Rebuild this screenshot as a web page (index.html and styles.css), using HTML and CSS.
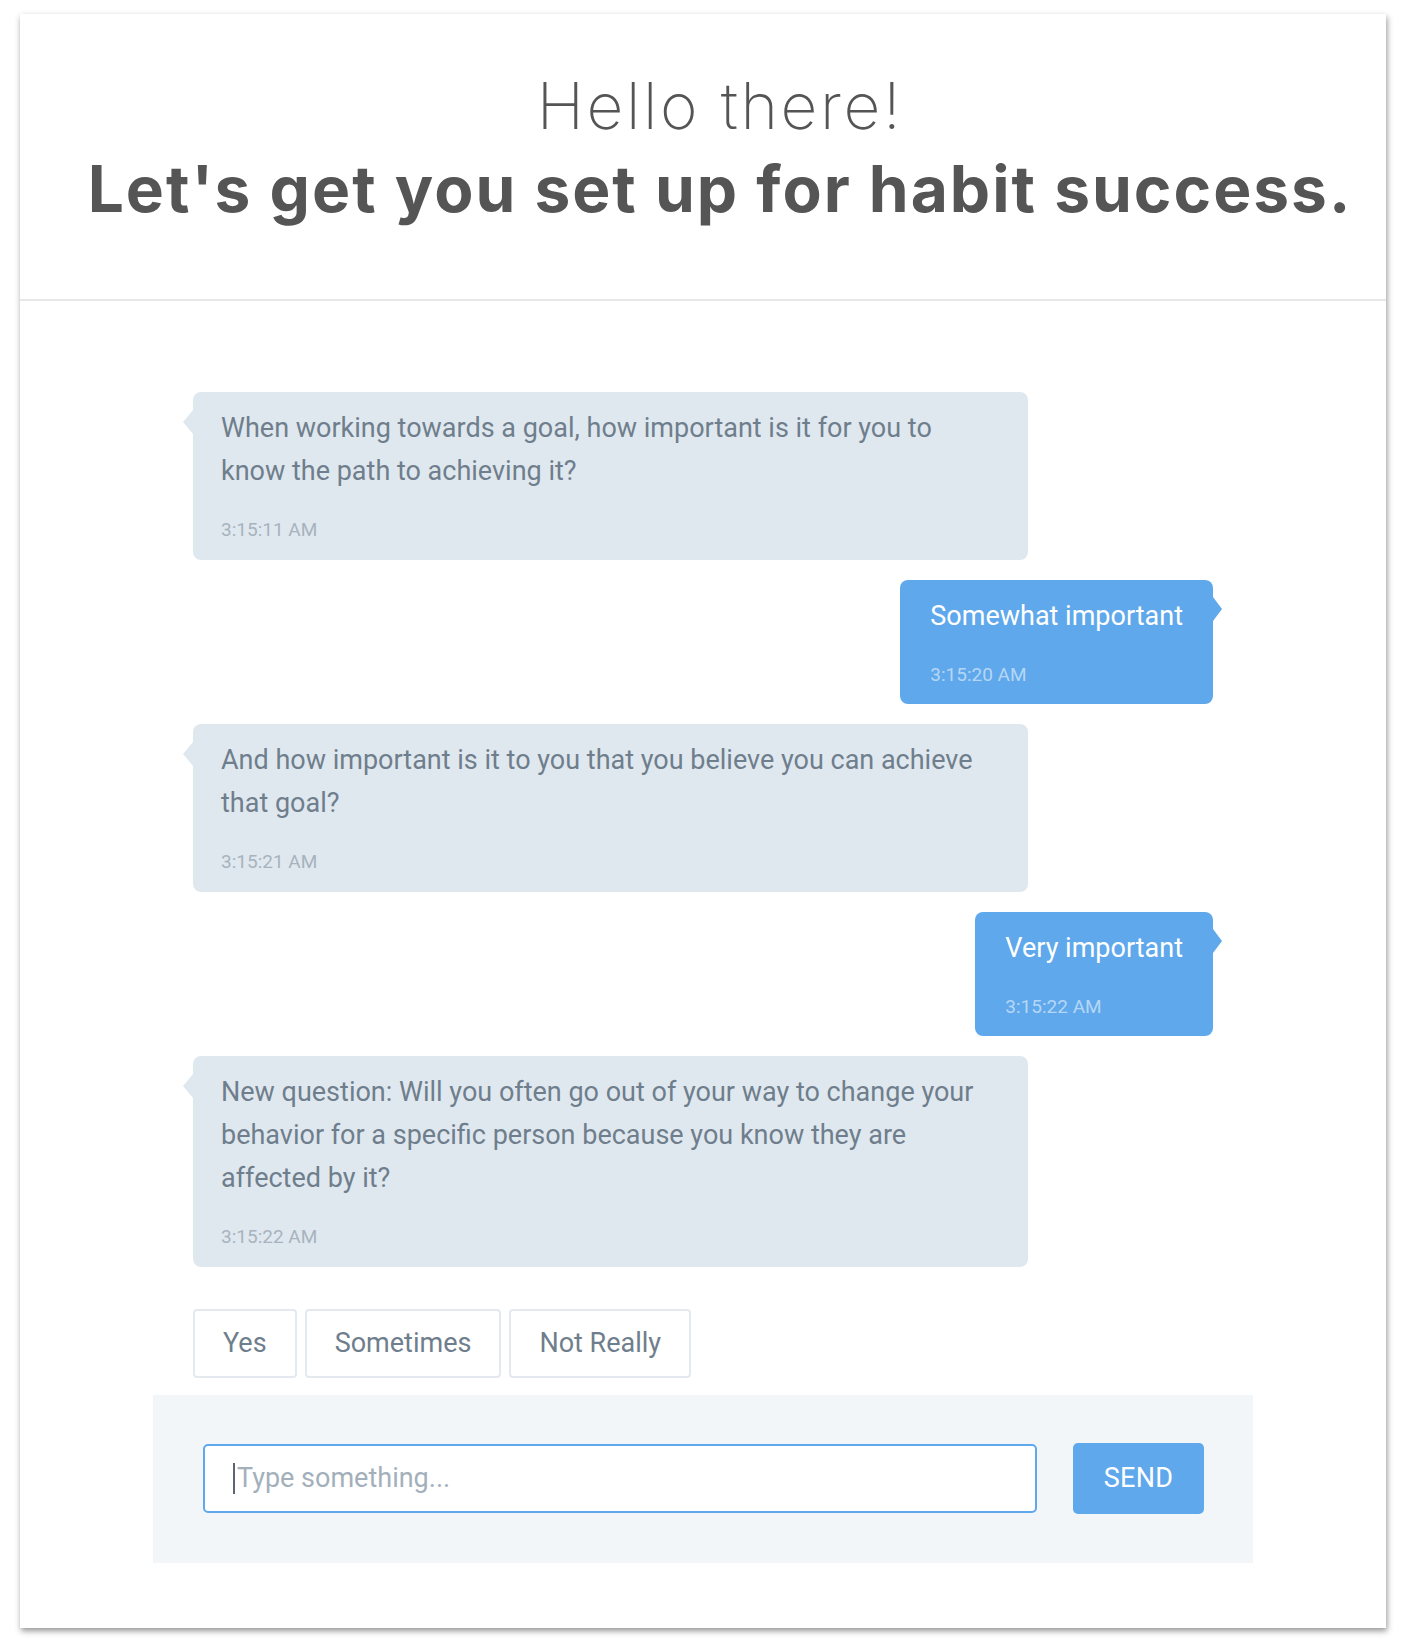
FILE: index.html
```html
<!DOCTYPE html>
<html lang="en">
<head>
<meta charset="utf-8">
<title>Habit setup</title>
<link rel="stylesheet" href="styles.css">
</head>
<body>
<div class="frame">
  <div class="card">
    <header class="intro">
      <h1 class="intro-title">
        <span class="hello">Hello there!</span>
        <span class="lead">Let's get you set up for habit success.</span>
      </h1>
    </header>
    <main class="chat">
      <div class="thread">
        <div class="msg bot">
          <p class="text">When working towards a goal, how important is it for you to know the path to achieving it?</p>
          <span class="time">3:15:11 AM</span>
        </div>
        <div class="msg user">
          <p class="text">Somewhat important</p>
          <span class="time">3:15:20 AM</span>
        </div>
        <div class="msg bot">
          <p class="text">And how important is it to you that you believe you can achieve that goal?</p>
          <span class="time">3:15:21 AM</span>
        </div>
        <div class="msg user">
          <p class="text">Very important</p>
          <span class="time">3:15:22 AM</span>
        </div>
        <div class="msg bot">
          <p class="text">New question: Will you often go out of your way to change your behavior for a specific person because you know they are affected by it?</p>
          <span class="time">3:15:22 AM</span>
        </div>
        <div class="choices">
          <button class="choice" type="button">Yes</button>
          <button class="choice" type="button">Sometimes</button>
          <button class="choice" type="button">Not Really</button>
        </div>
      </div>
      <form class="composer">
        <div class="field">
          <span class="caret"></span>
          <input class="input" type="text" placeholder="Type something...">
        </div>
        <button class="send" type="button">SEND</button>
      </form>
    </main>
  </div>
</div>
</body>
</html>
```
FILE: styles.css
```css
* {
  box-sizing: border-box;
}

html, body {
  margin: 0;
  padding: 0;
  background: #ffffff;
}

body {
  font-family: Roboto, "Liberation Sans", sans-serif;
}

.frame {
  padding: 14px 18px 14px 20px;
}

.card {
  width: 1366px;
  height: 1614px;
  background: #ffffff;
  box-shadow: 1px 3px 6px rgba(0, 0, 0, 0.42);
  display: flex;
  flex-direction: column;
}

/* Header */
.intro {
  padding: 50px 0 68px 34px;
  border-bottom: 2px solid #e6e8ea;
  text-align: center;
  color: #555555;
}

.intro-title {
  margin: 0;
  font-family: Inter, Lato, "Open Sans", sans-serif;
  font-weight: normal;
}

.hello {
  display: block;
  font-size: 64px;
  line-height: 83px;
  font-weight: 200;
  letter-spacing: 2.6px;
}

.lead {
  display: block;
  font-size: 64px;
  line-height: 84px;
  font-weight: 700;
  letter-spacing: 2px;
}

/* Chat */
.chat {
  padding-top: 91px;
  display: flex;
  flex-direction: column;
  align-items: center;
}

.thread {
  width: 1020px;
  display: flex;
  flex-direction: column;
  align-items: flex-start;
  gap: 20px;
}

.msg {
  position: relative;
  border-radius: 8px;
  padding: 15px 30px 17px 30px;
}

.msg .text {
  margin: 0;
  font-size: 27px;
  line-height: 43px;
  font-weight: 400;
}

.msg .time {
  display: block;
  margin-top: 24px;
  font-size: 19px;
  line-height: 25.5px;
  font-weight: 400;
}

.bot {
  width: 835px;
  padding-left: 28px;
  padding-right: 40px;
  background: #e0e8ef;
  color: #6f7e8c;
}

.bot .time {
  color: #a7b3be;
}

.bot::before {
  content: "";
  position: absolute;
  left: -10px;
  top: 18px;
  border-top: 12px solid transparent;
  border-bottom: 12px solid transparent;
  border-right: 10px solid #e0e8ef;
}

.user {
  align-self: flex-end;
  background: #5fa8eb;
  color: #ffffff;
}

.user .time {
  color: rgba(255, 255, 255, 0.55);
}

.user::after {
  content: "";
  position: absolute;
  right: -9px;
  top: 17px;
  border-top: 12px solid transparent;
  border-bottom: 12px solid transparent;
  border-left: 9px solid #5fa8eb;
}

/* Quick replies */
.choices {
  display: flex;
  gap: 8px;
  margin-top: 22px;
}

.choice {
  height: 69px;
  padding: 0 28px;
  border: 2px solid #e3e9ef;
  border-radius: 4px;
  background: #ffffff;
  color: #6f7e8c;
  font-family: Roboto, "Liberation Sans", sans-serif;
  font-size: 27px;
  font-weight: 400;
}

/* Composer */
.composer {
  width: 1100px;
  margin: 17px 0 0;
  padding: 48px 49px 49px 50px;
  background: #f2f6f9;
  display: flex;
  align-items: center;
  gap: 36px;
}

.field {
  position: relative;
  flex: 1;
}

.caret {
  position: absolute;
  left: 30px;
  top: 19px;
  width: 2px;
  height: 31px;
  background: #5d6670;
}

.input {
  display: block;
  width: 100%;
  height: 69px;
  padding: 0 20px 0 32px;
  border: 2px solid #5fa8eb;
  border-radius: 5px;
  background: #ffffff;
  font-family: Roboto, "Liberation Sans", sans-serif;
  font-size: 27px;
  font-weight: 400;
  color: #6f7e8c;
  outline: none;
}

.input::placeholder {
  color: #a3b0bb;
}

.send {
  width: 131px;
  height: 71px;
  border: none;
  border-radius: 5px;
  background: #5fa8eb;
  color: #ffffff;
  font-family: Roboto, "Liberation Sans", sans-serif;
  font-size: 27px;
  font-weight: 400;
  letter-spacing: 0.3px;
}
```
